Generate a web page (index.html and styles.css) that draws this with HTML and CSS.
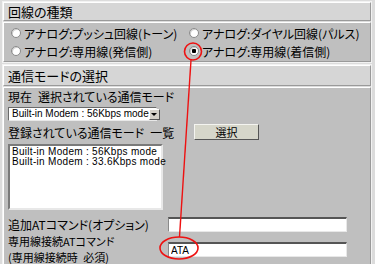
FILE: index.html
```html
<!DOCTYPE html>
<html lang="ja">
<head>
<meta charset="UTF-8">
<meta name="viewport" content="width=device-width, initial-scale=1.0">
<title>回線の種類</title>
<link rel="stylesheet" href="styles.css">
</head>
<body>

<div class="page">
    <div class="section">
        <div class="section-head">回線の種類</div>
        <div class="section-body radios">
            <label class="radio-item"><input type="radio" name="line"> アナログ:プッシュ回線(トーン)</label>
            <label class="radio-item"><input type="radio" name="line"> アナログ:ダイヤル回線(パルス)</label>
            <label class="radio-item"><input type="radio" name="line"> アナログ:専用線(発信側)</label>
            <label class="radio-item"><input type="radio" name="line" checked> アナログ:専用線(着信側)</label>
        </div>
    </div>

    <div class="section second">
        <div class="section-head">通信モードの選択</div>
        <div class="section-body modes">
            <div class="field-label">現在&ensp;選択されている通信モード</div>
            <div class="select-box">
                <span class="select-text">Built-in Modem : 56Kbps mode</span>
                <span class="select-arrow"></span>
            </div>
            <div class="list-row">
                <span class="list-label">登録されている通信モード&ensp;一覧</span>
                <button class="pick-button">選択</button>
            </div>
            <div class="list-box">
                <div class="list-item">Built-in Modem : 56Kbps mode</div>
                <div class="list-item">Built-in Modem : 33.6Kbps mode</div>
            </div>
            <div class="at-row">
                <span class="at-label">追加ATコマンド(オプション)</span>
                <input type="text" class="at-input">
            </div>
            <div class="at-row leased">
                <span class="at-label">専用線接続ATコマンド<br>(専用線接続時&ensp;必須)</span>
                <input type="text" class="at-input" value="ATA">
            </div>
        </div>
    </div>
</div>

<!-- 注釈 (赤い丸と線) -->
<svg class="marks" width="375" height="264" viewBox="0 0 375 264">
    <circle cx="193" cy="51.5" r="8.5" fill="none" stroke="#ee1111" stroke-width="1.6"/>
    <line x1="191" y1="60" x2="179.5" y2="237" stroke="#ee1111" stroke-width="1.4"/>
    <ellipse cx="179" cy="248" rx="19" ry="11" fill="none" stroke="#ee1111" stroke-width="1.6"/>
</svg>

</body>
</html>
```

FILE: styles.css
```css
body {
    margin: 0;
    padding: 0;
    background-color: #dcdcdc;
    font-family: "Noto Sans CJK JP", sans-serif;
    font-feature-settings: "palt";
    font-size: 12px;
    color: #000000;
    width: 375px;
    height: 264px;
    overflow: hidden;
    position: relative;
}

.page {
    padding: 1px 3px 0 2px;
}

.section {
    border: 1px solid #f2f2f2;
}

.second {
    margin-top: 1px;
}

.section-head {
    height: 17px;
    line-height: 17px;
    padding-left: 4px;
    font-size: 13px;
    background-color: #d6d6d6;
    border: 1px solid;
    border-color: #ffffff #9a9a9a #9a9a9a #ffffff;
}

.second .section-head {
    height: 19px;
    line-height: 19px;
}

.section-body {
    margin-top: 1px;
    background-color: #bfbfbf;
    border: 1px solid;
    border-color: #ffffff #9a9a9a #9a9a9a #ffffff;
}

/* 回線の種類 */
.radios {
    display: grid;
    grid-template-columns: 178px 1fr;
    padding: 1px 0 1px 0;
}

.radio-item {
    display: flex;
    align-items: center;
    height: 18px;
    padding-left: 7px;
    white-space: nowrap;
}

.radio-item input {
    appearance: none;
    -webkit-appearance: none;
    width: 10px;
    height: 10px;
    margin: 0 3px 0 0;
    border-radius: 50%;
    background-color: #ffffff;
    border: 1px solid #8a8a8a;
    box-shadow: inset 1px 1px 0 #d0d0d0;
    flex: none;
}

.radio-item input:checked {
    background: radial-gradient(circle, #000000 0, #000000 2px, #ffffff 2.5px);
}

/* 通信モードの選択 */
.modes {
    padding: 1px 0 2px 4px;
}

.field-label {
    height: 14px;
    line-height: 14px;
    margin-top: 1px;
}

.select-box {
    display: flex;
    align-items: center;
    width: 147px;
    height: 12px;
    margin-top: 3px;
    background-color: #ffffff;
    border: 1px solid;
    border-color: #6a6a6a #e8e8e8 #e8e8e8 #6a6a6a;
    font-family: "Liberation Sans", sans-serif;
    font-feature-settings: normal;
    font-size: 10px;
    line-height: 12px;
}

.select-text {
    flex: 1;
    padding-left: 3px;
    white-space: nowrap;
}

.select-arrow {
    width: 11px;
    height: 11px;
    flex: none;
    background-color: #d4d0c8;
    border: 1px solid;
    border-color: #ffffff #555555 #555555 #ffffff;
    box-sizing: border-box;
    position: relative;
}

.select-arrow::after {
    content: "";
    position: absolute;
    left: 1.5px;
    top: 3px;
    border-left: 3px solid transparent;
    border-right: 3px solid transparent;
    border-top: 3px solid #000000;
}

.list-row {
    display: flex;
    align-items: center;
    height: 16px;
    margin-top: 3px;
}

.list-label {
    width: 186px;
    flex: none;
    white-space: nowrap;
}

.pick-button {
    width: 65px;
    height: 16px;
    padding: 0;
    font-family: "Noto Sans CJK JP", sans-serif;
    font-size: 11px;
    line-height: 12px;
    color: #000000;
    background-color: #d6d6ca;
    border: 1px solid;
    border-color: #f4f4f0 #555555 #555555 #f4f4f0;
    cursor: pointer;
}

.list-box {
    width: 151px;
    height: 61px;
    margin-top: 4px;
    padding-top: 1px;
    background-color: #ffffff;
    border: 2px solid;
    border-color: #7a7a7a #e8e8e8 #e8e8e8 #7a7a7a;
    font-family: "Liberation Sans", sans-serif;
    font-feature-settings: normal;
    font-size: 10px;
    letter-spacing: 0.3px;
}

.list-item {
    height: 10px;
    line-height: 10px;
    padding-left: 2px;
    white-space: nowrap;
}

.at-row {
    display: flex;
    align-items: center;
    height: 15px;
    margin-top: 7px;
}

.at-label {
    width: 160px;
    flex: none;
    white-space: nowrap;
    line-height: 15px;
}

.at-input {
    width: 179px;
    height: 15px;
    margin: 0;
    padding: 0 0 0 2px;
    box-sizing: border-box;
    background-color: #ffffff;
    border: 1px solid;
    border-top: 2px solid #555555;
    border-color: #555555 #e8e8e8 #e8e8e8 #8a8a8a;
    font-family: "Liberation Sans", sans-serif;
    font-size: 10px;
    color: #000000;
}

.leased {
    height: 32px;
    margin-top: 1px;
    align-items: flex-start;
}

.leased .at-label {
    font-size: 11px;
    line-height: 16px;
}

.leased .at-input {
    margin-top: 9px;
}

.marks {
    position: absolute;
    left: 0;
    top: 0;
    pointer-events: none;
}
```
